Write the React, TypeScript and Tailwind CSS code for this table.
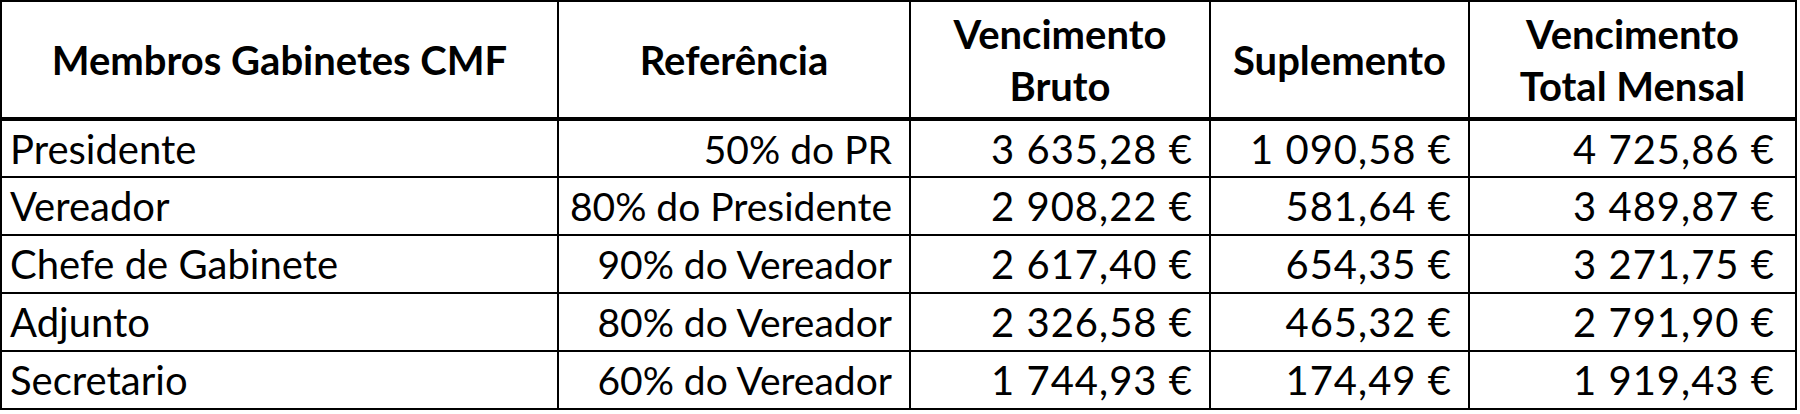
import React from "react";

const rows = [
  ["Presidente", "50% do PR", "3 635,28 €", "1 090,58 €", "4 725,86 €"],
  ["Vereador", "80% do Presidente", "2 908,22 €", "581,64 €", "3 489,87 €"],
  ["Chefe de Gabinete", "90% do Vereador", "2 617,40 €", "654,35 €", "3 271,75 €"],
  ["Adjunto", "80% do Vereador", "2 326,58 €", "465,32 €", "2 791,90 €"],
  ["Secretario", "60% do Vereador", "1 744,93 €", "174,49 €", "1 919,43 €"],
];

const th =
  "border-2 border-black border-b-4 text-center font-bold text-[40px] leading-[52px] px-1 whitespace-nowrap";

const tdCls = [
  "border-2 border-black text-left pl-[8px] text-[40px] leading-[54px] whitespace-nowrap",
  "border-2 border-black text-right pr-[17px] text-[39px] leading-[54px] whitespace-nowrap",
  "border-2 border-black text-right pr-[16px] text-[40px] leading-[54px] tracking-[1px] whitespace-nowrap",
  "border-2 border-black text-right pr-[16px] text-[40px] leading-[54px] tracking-[1px] whitespace-nowrap",
  "border-2 border-black text-right pr-[20px] text-[40px] leading-[54px] tracking-[1px] whitespace-nowrap",
];

export default function App() {
  return (
    <div className="w-[1800px] h-[414px] bg-white text-black font-['Lato','Liberation_Sans',sans-serif]">
      <table className="table-fixed border-collapse border-2 border-black w-[1797px]">
        <colgroup>
          <col className="w-[557px]" />
          <col className="w-[352px]" />
          <col className="w-[300px]" />
          <col className="w-[259px]" />
          <col className="w-[327px]" />
        </colgroup>
        <thead>
          <tr className="h-[118px] border-b-4 border-black">
            <th className={th}>Membros Gabinetes CMF</th>
            <th className={th}>Referência</th>
            <th className={th}>
              Vencimento
              <br />
              Bruto
            </th>
            <th className={th}>Suplemento</th>
            <th className={th}>
              Vencimento
              <br />
              Total Mensal
            </th>
          </tr>
        </thead>
        <tbody>
          {rows.map((r, i) => (
            <tr key={i} className="h-[58px]">
              {r.map((c, j) => (
                <td key={j} className={tdCls[j]}>
                  {c}
                </td>
              ))}
            </tr>
          ))}
        </tbody>
      </table>
    </div>
  );
}
